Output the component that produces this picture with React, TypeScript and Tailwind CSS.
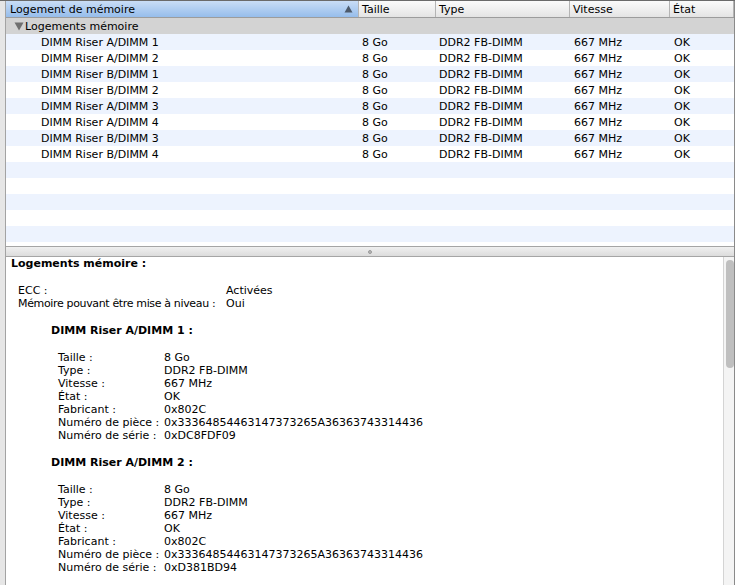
import { Fragment } from "react";

const slots = [
  "DIMM Riser A/DIMM 1",
  "DIMM Riser A/DIMM 2",
  "DIMM Riser B/DIMM 1",
  "DIMM Riser B/DIMM 2",
  "DIMM Riser A/DIMM 3",
  "DIMM Riser A/DIMM 4",
  "DIMM Riser B/DIMM 3",
  "DIMM Riser B/DIMM 4",
];

const details = [
  { name: "DIMM Riser A/DIMM 1", serial: "0xDC8FDF09" },
  { name: "DIMM Riser A/DIMM 2", serial: "0xD381BD94" },
];

const cols = "grid grid-cols-[353px_77px_134px_100px_1fr]";

function HeaderCell({ label, first }: { label: string; first?: boolean }) {
  return (
    <div
      className={`flex items-center border-r border-[#b4b4b4] ${
        first
          ? "bg-gradient-to-b from-[#c9ddf6] to-[#96bdeb] pl-[4px] pr-[4px] justify-between"
          : "pl-[3px]"
      }`}
    >
      <span>{label}</span>
      {first && (
        <svg width="9" height="8" viewBox="0 0 9 8" className="mr-[1px]">
          <path d="M4.5 0.5 L8.5 7.5 L0.5 7.5 Z" fill="#4d5a6b" />
        </svg>
      )}
    </div>
  );
}

function KV({ k, v, w, tight }: { k: string; v: string; w: string; tight?: boolean }) {
  return (
    <div className="flex h-[13px] items-center whitespace-nowrap">
      <span className={`${w} shrink-0 ${tight ? "tracking-[-0.35px]" : ""}`}>{k}</span>
      <span>{v}</span>
    </div>
  );
}

export default function App() {
  const empty = Array.from({ length: 5 });

  return (
    <div className="w-[735px] h-[585px] overflow-hidden bg-white flex flex-col font-['Lucida_Grande','DejaVu_Sans',sans-serif] text-[11px] text-black leading-none">
      <div className="h-px bg-[#6a6a6a] shrink-0" />
      <div className="flex flex-1 min-h-0">
        {/* window chrome strip */}
        <div className="w-[6px] shrink-0 bg-[#e6e6e6] border-r border-[#a3a3a3]" />
        <div className="flex-1 flex flex-col min-w-0 border-r border-[#8a8a8a]">
          {/* upper table */}
          <div className="h-[245px] shrink-0 overflow-hidden flex flex-col">
            <div
              className={`${cols} h-[17px] shrink-0 bg-gradient-to-b from-[#fbfbfb] to-[#e4e4e4] border-b border-[#9c9c9c]`}
            >
              <HeaderCell label="Logement de mémoire" first />
              <HeaderCell label="Taille" />
              <HeaderCell label="Type" />
              <HeaderCell label="Vitesse" />
              <HeaderCell label="État" />
            </div>
            <div className="h-[16px] shrink-0 bg-[#d3d3d3] flex items-center pl-[8px]">
              <svg width="10" height="9" viewBox="0 0 10 9" className="mr-[1px]">
                <path d="M0.5 0.5 L9.5 0.5 L5 8.5 Z" fill="#6f6f6f" />
              </svg>
              <span>Logements mémoire</span>
            </div>
            {slots.map((s, i) => (
              <div
                key={s}
                className={`${cols} h-[16px] shrink-0 items-center ${
                  i % 2 === 0 ? "bg-[#edf3fe]" : "bg-white"
                }`}
              >
                <span className="pl-[35px]">{s}</span>
                <span className="pl-[3px]">8 Go</span>
                <span className="pl-[3px]">DDR2 FB-DIMM</span>
                <span className="pl-[4px]">667 MHz</span>
                <span className="pl-[4px]">OK</span>
              </div>
            ))}
            {empty.map((_, i) => (
              <div
                key={i}
                className={`h-[16px] shrink-0 ${i % 2 === 0 ? "bg-[#edf3fe]" : "bg-white"}`}
              />
            ))}
          </div>

          {/* splitter */}
          <div className="h-[11px] shrink-0 bg-gradient-to-b from-[#f0f0f0] to-[#dcdcdc] border-t border-b border-[#a5a5a5] flex items-center justify-center">
            <div className="w-[4px] h-[4px] rounded-full bg-[#b8b8b8] border border-[#9a9a9a]" />
          </div>

          {/* lower details */}
          <div className="flex-1 flex min-h-0">
            <div className="flex-1 overflow-hidden pl-[5px]">
              <div className="h-[13px] flex items-center font-bold">Logements mémoire :</div>
              <div className="pl-[7px] mt-[14px]">
                <KV k="ECC :" v="Activées" w="w-[208px]" />
                <KV k="Mémoire pouvant être mise à niveau :" v="Oui" w="w-[208px]" tight />
              </div>
              {details.map((d) => (
                <Fragment key={d.name}>
                  <div className="pl-[40px] mt-[14px] h-[13px] flex items-center font-bold">
                    {d.name} :
                  </div>
                  <div className="pl-[47px] mt-[14px]">
                    <KV k="Taille :" v="8 Go" w="w-[106px]" />
                    <KV k="Type :" v="DDR2 FB-DIMM" w="w-[106px]" />
                    <KV k="Vitesse :" v="667 MHz" w="w-[106px]" />
                    <KV k="État :" v="OK" w="w-[106px]" />
                    <KV k="Fabricant :" v="0x802C" w="w-[106px]" />
                    <KV
                      k="Numéro de pièce :"
                      v="0x33364854463147373265A36363743314436"
                      w="w-[106px]"
                    />
                    <KV k="Numéro de série :" v={d.serial} w="w-[106px]" />
                  </div>
                </Fragment>
              ))}
            </div>
            {/* scrollbar */}
            <div className="w-[11px] shrink-0 bg-[#f4f4f4] border-l border-[#d4d4d4] pt-[3px] pl-[2px]">
              <div className="w-[8px] h-[108px] rounded-[4px] bg-[#bfbfbf]" />
            </div>
          </div>
        </div>
      </div>
    </div>
  );
}
